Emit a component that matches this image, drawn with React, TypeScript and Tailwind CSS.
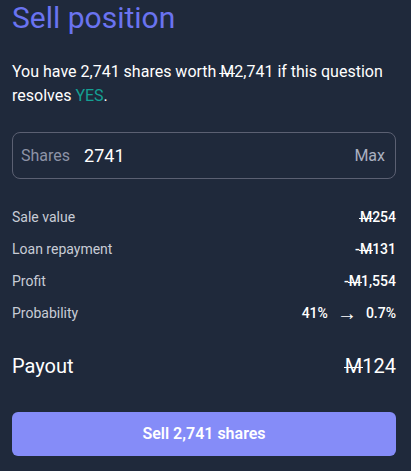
import React from 'react';

const Mana: React.FC = () => (
  <span className="relative inline-block">
    M
    <span className="absolute left-[-1px] right-[-1px] top-[55%] h-px bg-current" />
  </span>
);

const rows: { label: string; value: React.ReactNode }[] = [
  { label: 'Sale value', value: <><Mana />254</> },
  { label: 'Loan repayment', value: <>-<Mana />131</> },
  { label: 'Profit', value: <>-<Mana />1,554</> },
  {
    label: 'Probability',
    value: (
      <span className="flex items-center gap-[9px]">
        41% <span className="text-[20px] font-normal leading-[20px]">→</span> 0.7%
      </span>
    ),
  },
];

export default function App() {
  return (
    <div
      className="min-h-[471px] w-[411px] bg-[#1f293b] pl-3 pr-[15px] text-white"
      style={{ fontFamily: 'Roboto, "Noto Sans", sans-serif' }}
    >
      <h1 className="text-[30px] leading-[36px] text-[#6a73f0]">Sell position</h1>

      <p className="mt-[24px] text-[16px] leading-[24px] text-white">
        You have 2,741 shares worth <Mana />2,741 if this question resolves{' '}
        <span className="text-[#14a093]">YES</span>.
      </p>

      <div className="mt-[24px] flex h-[47px] items-center rounded-lg border border-[#5b6072] px-2">
        <span className="text-[16px] text-[#8d93a6]">Shares</span>
        <span className="ml-[14px] text-[18px] text-white">2741</span>
        <span className="ml-auto mr-[2px] text-[16px] text-[#aab0c0]">Max</span>
      </div>

      <div className="mt-[28px] flex flex-col gap-[12px]">
        {rows.map((r) => (
          <div key={r.label} className="flex items-center justify-between text-[14px] leading-[20px]">
            <span className="text-[#c8ccd6]">{r.label}</span>
            <span className="font-medium text-white">{r.value}</span>
          </div>
        ))}
      </div>

      <div className="mt-[29px] flex items-center justify-between text-[20px] leading-[28px]">
        <span>Payout</span>
        <span><Mana />124</span>
      </div>

      <button className="mt-[32px] flex h-[44px] w-full items-center justify-center rounded-md bg-[#858cf8] text-[16px] font-semibold text-white">
        Sell 2,741 shares
      </button>
    </div>
  );
}
